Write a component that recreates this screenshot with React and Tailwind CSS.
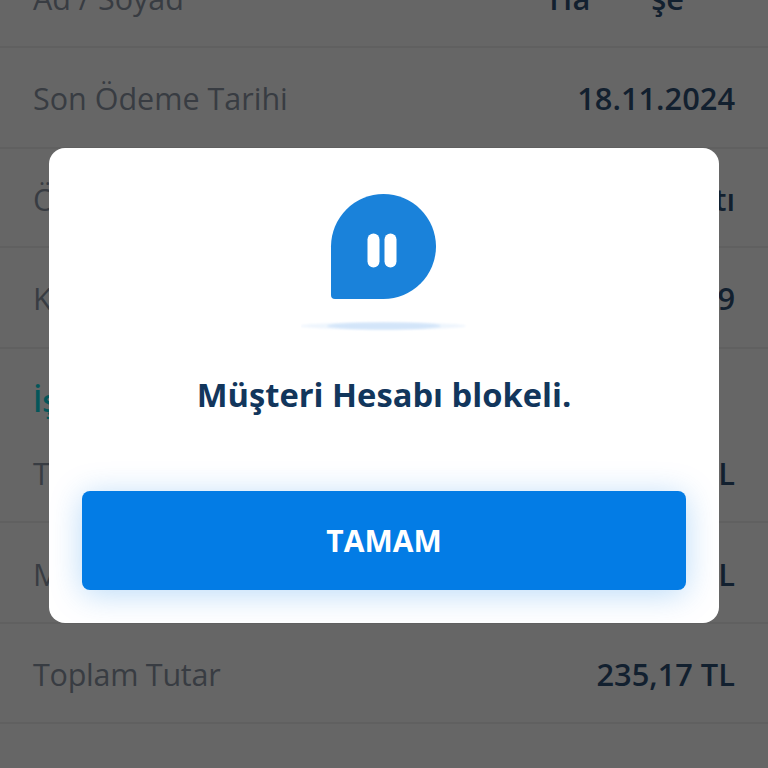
const rows = [
  { label: "Son Ödeme Tarihi", value: "18.11.2024", h: "h-[101px] pt-[1px]" },
  { label: "Ö", value: "tı", h: "h-[99px] pt-[3px]" },
  { label: "K", value: "9", h: "h-[101px] pt-[2px]" },
];
const rowsBottom = [
  { label: "T", value: "L", h: "h-[99px] pt-[2px]" },
  { label: "M", value: "L", h: "h-[101px] pt-[3px]" },
  { label: "Toplam Tutar", value: "235,17 TL", h: "h-[100px] pt-[3px]", tight: "tracking-[-0.25px]" },
];

function Row({ label, value, h, tight = "" }) {
  return (
    <div className={`flex items-center justify-between border-b-2 border-[#606060] px-[33px] ${h}`}>
      <span className={`text-[30.5px] leading-none text-[#383c42] ${tight}`}>{label}</span>
      <span className="text-[30.8px] leading-none font-semibold text-[#12202f]">{value}</span>
    </div>
  );
}

function PauseBubble() {
  return (
    <svg width="166" height="140" viewBox="0 0 166 140" className="block">
      <defs>
        <filter id="soft" x="-10%" y="-100%" width="120%" height="300%">
          <feGaussianBlur stdDeviation="1" />
        </filter>
      </defs>
      <path
        d="M30 52.5 A52.5 52.5 0 1 1 82.5 105 L34 105 A4 4 0 0 1 30 101 Z"
        fill="#1a82da"
      />
      <rect x="66.5" y="39.5" width="12" height="34" rx="6" fill="#ffffff" />
      <rect x="83.5" y="39.5" width="12" height="34" rx="6" fill="#ffffff" />
      <ellipse cx="82" cy="132" rx="83" ry="3.5" fill="#eef5fd" filter="url(#soft)" />
      <ellipse cx="83" cy="132" rx="57" ry="3.5" fill="#d3e5f9" filter="url(#soft)" />
    </svg>
  );
}

export default function App() {
  return (
    <div className="relative h-[768px] w-[768px] overflow-hidden bg-[#666666] font-['Open_Sans',sans-serif]">
      <div className="-mt-[53px]">
        <div className="flex h-[101px] items-center justify-between border-b-2 border-[#606060] px-[33px] pt-[3px]">
          <span className="text-[30.5px] leading-none text-[#383c42]">Ad / Soyad</span>
          <span className="flex gap-[61px] pr-[51px] text-[30.8px] leading-none font-semibold text-[#12202f]">
            <span>Ha</span>
            <span>şe</span>
          </span>
        </div>
        {rows.map((r) => (
          <Row key={r.label} {...r} />
        ))}
        <div className="flex h-[75px] items-center px-[33px] pt-[27px]">
          <span className="text-[30.5px] leading-none font-semibold text-[#04565a]">İş</span>
        </div>
        {rowsBottom.map((r) => (
          <Row key={r.label} {...r} />
        ))}
      </div>

      <div className="absolute inset-0 flex items-start justify-center pt-[148px]">
        <div className="flex h-[475px] w-[670px] flex-col items-center overflow-hidden rounded-[16px] bg-white px-[33px] pt-[46px]">
          <PauseBubble />
          <p className="mt-[39px] text-[32.7px] leading-[44px] font-bold whitespace-nowrap text-[#12365c]">Müşteri Hesabı blokeli.</p>
          <button className="mt-[74px] flex h-[99px] w-full shrink-0 items-center justify-center rounded-[8px] bg-[#037ce5] text-[30px] font-bold text-white shadow-[0_4px_32px_rgba(4,123,230,0.28)]">
            TAMAM
          </button>
        </div>
      </div>
    </div>
  );
}
